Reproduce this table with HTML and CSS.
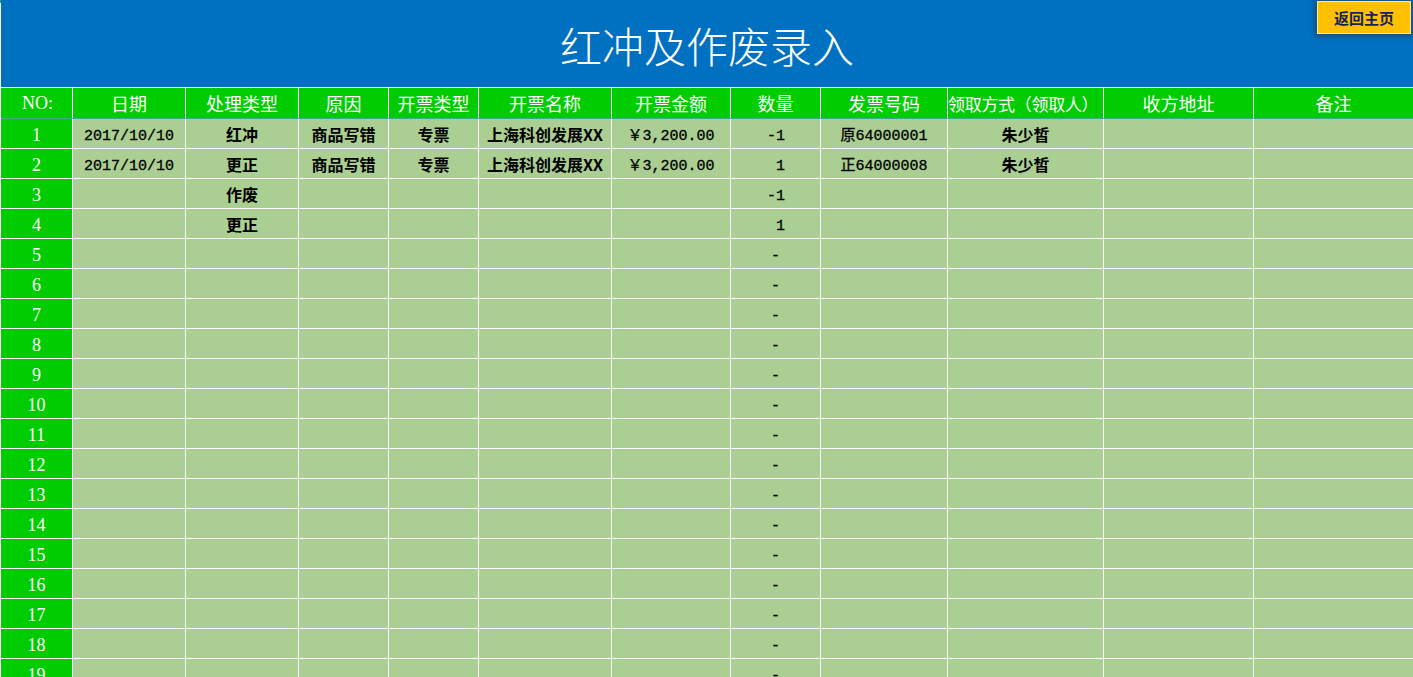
FILE: index.html
```html
<!DOCTYPE html>
<html lang="zh-CN">
<head>
<meta charset="utf-8">
<title>红冲及作废录入</title>
<link rel="stylesheet" href="styles.css">
</head>
<body>
<div class="sheet">
  <span class="corner"></span>
  <header class="banner">
    <h1 class="title">红冲及作废录入</h1>
    <button class="home">返回主页</button>
  </header>
  <div class="table">
    <div class="row head">
      <div class="serif">NO:</div><div>日期</div><div>处理类型</div><div>原因</div><div>开票类型</div><div>开票名称</div><div>开票金额</div><div>数量</div><div>发票号码</div><div class="tight">领取方式（领取人）</div><div>收方地址</div><div>备注</div>
    </div>
    <div class="row">
      <div class="no">1</div><div class="mono low">2017/10/10</div><div>红冲</div><div>商品写错</div><div>专票</div><div>上海科创发展XX</div><div class="mono">￥3,200.00</div><div class="mono low qty">-1</div><div class="mono">原64000001</div><div>朱少皙</div><div></div><div></div>
    </div>
    <div class="row">
      <div class="no">2</div><div class="mono low">2017/10/10</div><div>更正</div><div>商品写错</div><div>专票</div><div>上海科创发展XX</div><div class="mono">￥3,200.00</div><div class="mono low qty">1</div><div class="mono">正64000008</div><div>朱少皙</div><div></div><div></div>
    </div>
    <div class="row">
      <div class="no">3</div><div></div><div>作废</div><div></div><div></div><div></div><div></div><div class="mono low qty">-1</div><div></div><div></div><div></div><div></div>
    </div>
    <div class="row">
      <div class="no">4</div><div></div><div>更正</div><div></div><div></div><div></div><div></div><div class="mono low qty">1</div><div></div><div></div><div></div><div></div>
    </div>
    <div class="row"><div class="no">5</div><div></div><div></div><div></div><div></div><div></div><div></div><div class="mono low qty zero">-</div><div></div><div></div><div></div><div></div></div>
    <div class="row"><div class="no">6</div><div></div><div></div><div></div><div></div><div></div><div></div><div class="mono low qty zero">-</div><div></div><div></div><div></div><div></div></div>
    <div class="row"><div class="no">7</div><div></div><div></div><div></div><div></div><div></div><div></div><div class="mono low qty zero">-</div><div></div><div></div><div></div><div></div></div>
    <div class="row"><div class="no">8</div><div></div><div></div><div></div><div></div><div></div><div></div><div class="mono low qty zero">-</div><div></div><div></div><div></div><div></div></div>
    <div class="row"><div class="no">9</div><div></div><div></div><div></div><div></div><div></div><div></div><div class="mono low qty zero">-</div><div></div><div></div><div></div><div></div></div>
    <div class="row"><div class="no">10</div><div></div><div></div><div></div><div></div><div></div><div></div><div class="mono low qty zero">-</div><div></div><div></div><div></div><div></div></div>
    <div class="row"><div class="no">11</div><div></div><div></div><div></div><div></div><div></div><div></div><div class="mono low qty zero">-</div><div></div><div></div><div></div><div></div></div>
    <div class="row"><div class="no">12</div><div></div><div></div><div></div><div></div><div></div><div></div><div class="mono low qty zero">-</div><div></div><div></div><div></div><div></div></div>
    <div class="row"><div class="no">13</div><div></div><div></div><div></div><div></div><div></div><div></div><div class="mono low qty zero">-</div><div></div><div></div><div></div><div></div></div>
    <div class="row"><div class="no">14</div><div></div><div></div><div></div><div></div><div></div><div></div><div class="mono low qty zero">-</div><div></div><div></div><div></div><div></div></div>
    <div class="row"><div class="no">15</div><div></div><div></div><div></div><div></div><div></div><div></div><div class="mono low qty zero">-</div><div></div><div></div><div></div><div></div></div>
    <div class="row"><div class="no">16</div><div></div><div></div><div></div><div></div><div></div><div></div><div class="mono low qty zero">-</div><div></div><div></div><div></div><div></div></div>
    <div class="row"><div class="no">17</div><div></div><div></div><div></div><div></div><div></div><div></div><div class="mono low qty zero">-</div><div></div><div></div><div></div><div></div></div>
    <div class="row"><div class="no">18</div><div></div><div></div><div></div><div></div><div></div><div></div><div class="mono low qty zero">-</div><div></div><div></div><div></div><div></div></div>
    <div class="row"><div class="no">19</div><div></div><div></div><div></div><div></div><div></div><div></div><div class="mono low qty zero">-</div><div></div><div></div><div></div><div></div></div>
  </div>
</div>
</body>
</html>
```
FILE: styles.css
```css
html, body {
  margin: 0;
  padding: 0;
  height: 677px;
  overflow: hidden;
  background: #ffffff;
}

.sheet {
  position: relative;
  padding-left: 1px;
  font-family: "Noto Sans CJK SC", sans-serif;
}

.corner {
  position: absolute;
  left: 0;
  top: 0;
  width: 3px;
  height: 3px;
  background: #21a366;
}

.banner {
  position: relative;
  height: 87px;
  background: #0070c0;
  display: flex;
  align-items: center;
  justify-content: center;
}

.title {
  margin: 0;
  color: #ffffff;
  font-size: 42px;
  font-weight: 300;
  line-height: 1;
  padding-top: 2px;
  font-family: "Noto Sans CJK SC", sans-serif;
}

.home {
  position: absolute;
  top: 1px;
  right: 2px;
  width: 94px;
  height: 33px;
  background: #ffc000;
  border: 1px solid #f5e9b8;
  box-shadow: 0 0 5px 2px rgba(50, 50, 50, 0.6);
  color: #14235a;
  font-family: "Noto Sans CJK SC", sans-serif;
  font-weight: bold;
  font-size: 15px;
  padding: 0;
  cursor: pointer;
}

.table {
  display: flex;
  flex-direction: column;
  gap: 1px;
  padding-top: 1px;
  background: #ffffff;
}

.row {
  display: grid;
  grid-template-columns: 71px 112px 112px 89px 89px 132px 118px 89px 126px 155px 149px 1fr;
  gap: 1px;
  height: 29px;
}

.row > div {
  background: #abcf92;
  color: #000000;
  display: flex;
  align-items: center;
  justify-content: center;
  font-size: 16px;
  font-weight: bold;
  white-space: nowrap;
  overflow: hidden;
}

.row.head {
  height: 30px;
  border-bottom: 1px solid #3fa88f;
  margin-bottom: -1px;
}

.row.head > div {
  background: #00cc00;
  color: #ffffff;
  font-size: 18px;
  font-weight: normal;
}

.row.head > div.serif {
  font-family: "Liberation Serif", serif;
  font-size: 18px;
  padding-left: 2px;
}

.row.head > div.tight {
  font-size: 17px;
  justify-content: flex-start;
  letter-spacing: -0.3px;
}

.row > div.no {
  background: #00cc00;
  color: #ffffff;
  font-family: "Liberation Serif", serif;
  font-size: 18px;
  font-weight: normal;
  padding-top: 3px;
}

.row > div.mono {
  font-family: "Liberation Mono", "Noto Sans CJK SC", monospace;
  font-size: 15px;
  font-weight: normal;
  -webkit-text-stroke: 0.3px #000000;
}

.row > div.low {
  padding-top: 6px;
}

.row > div.qty {
  justify-content: flex-end;
  padding-right: 35px;
}

.row > div.qty.zero {
  padding-right: 40px;
}
```
